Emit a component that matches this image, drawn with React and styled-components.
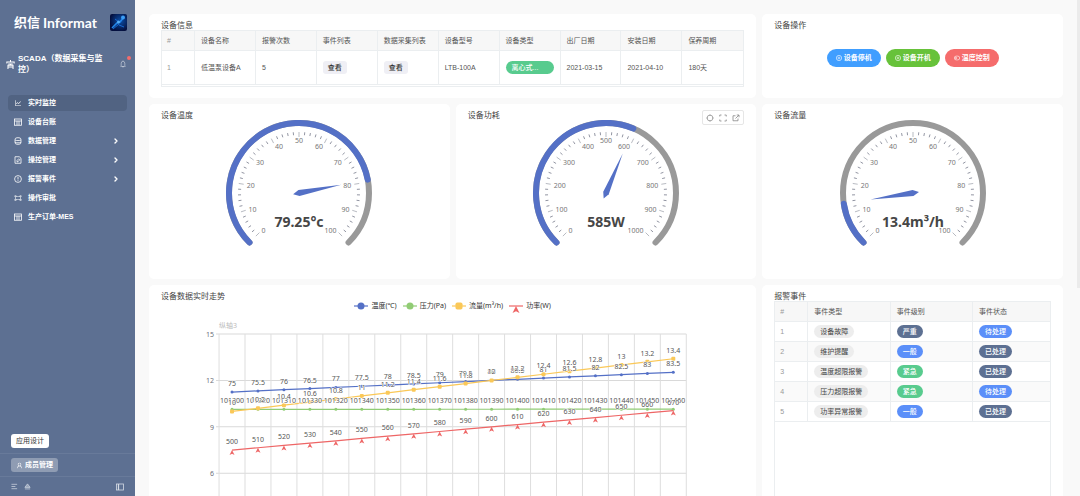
import styled, { createGlobalStyle, css } from 'styled-components';
import {
  AiOutlineLineChart,
  AiOutlineGateway,
  AiOutlineBell,
  AiOutlineUser,
} from 'react-icons/ai';
import { FiChevronRight } from 'react-icons/fi';

const GlobalStyle = createGlobalStyle`
  * {
    box-sizing: border-box;
  }

  body {
    margin: 0;
    font-family: 'Liberation Sans', 'Noto Sans CJK SC', sans-serif;
    font-size: 7px;
    line-height: 10px;
    color: #555;
  }

  button {
    font: inherit;
    border: none;
    padding: 0;
    cursor: pointer;
  }
`;

const Page = styled.div`
  position: relative;
  display: flex;
  height: 100vh;
  overflow: hidden;
  background: #f9f9f9;
`;

/* ---------- sidebar ---------- */

const Sidebar = styled.aside`
  flex: 0 0 135px;
  min-width: 0;
  display: flex;
  flex-direction: column;
  background: #5d7092;
  color: #fff;
`;

const Brand = styled.div`
  display: flex;
  align-items: center;
  justify-content: space-between;
  height: 17px;
  margin: 14px 8px 0 14px;
`;

const BrandName = styled.div`
  display: flex;
  align-items: center;
  gap: 3px;
  font-family: Lato, 'Noto Sans CJK SC', sans-serif;
  font-size: 14px;
  font-weight: 700;
  line-height: 17px;
  white-space: nowrap;
`;

const BrandCn = styled.span`
  font-size: 13px;
`;

const AppTitle = styled.div`
  display: flex;
  align-items: center;
  gap: 3px;
  margin: 22px 8px 0 6px;
`;

const AppName = styled.h1`
  flex: 1;
  margin: 0;
  padding-right: 6px;
  font-size: 8px;
  font-weight: 700;
  line-height: 11px;
`;

const BellButton = styled.button`
  position: relative;
  display: flex;
  background: none;
  color: #d5dbe5;

  &::after {
    content: '';
    position: absolute;
    top: -4px;
    right: -4px;
    width: 4px;
    height: 4px;
    border-radius: 50%;
    background: #f56c6c;
  }
`;

const Menu = styled.nav`
  display: flex;
  flex-direction: column;
  gap: 3px;
  margin: 20px 8px 0;
`;

const MenuItem = styled.a`
  display: flex;
  align-items: center;
  gap: 6px;
  height: 16px;
  padding: 0 7px 0 6px;
  border-radius: 4px;
  background: ${props => props.$active ? '#516382' : 'transparent'};
  color: #fff;
  font-weight: 700;
  text-decoration: none;

  span {
    flex: 1;
  }
`;

const SidebarBottom = styled.div`
  margin-top: auto;
`;

const SideRow = styled.div`
  display: flex;
  align-items: center;
  gap: 6px;
  height: ${props => props.$height}px;
  padding: 0 11px;
  border-top: 1px solid ${props => props.$plain ? 'transparent' : '#687a9a'};
`;

const SideButton = styled.button`
  display: flex;
  align-items: center;
  gap: 2px;
  height: 14px;
  padding: 0 5px;
  border-radius: 3px;
  background: ${props => props.$light ? '#fff' : '#8f9cb3'};
  color: ${props => props.$light ? '#333' : '#fff'};
  font-weight: ${props => props.$light ? 400 : 700};
`;

const GhostButton = styled.button`
  display: flex;
  background: none;
  color: #d5dbe5;
  margin-left: ${props => props.$end ? 'auto' : '0'};
`;

/* ---------- content ---------- */

const Content = styled.main`
  flex: 1;
  min-width: 0;
  display: grid;
  grid-template-columns: repeat(3, minmax(0, 1fr));
  grid-template-rows: 84px 175px auto;
  align-content: start;
  gap: 6px;
  padding: 14px 17px 14px 14px;
`;

const Card = styled.section`
  position: relative;
  display: flex;
  flex-direction: column;
  grid-column: span ${props => props.$span || 1};
  padding: 7px 12px 0;
  border-radius: 5px;
  background: #fff;
`;

const CardTitle = styled.h2`
  margin: 0;
  font-size: 8px;
  font-weight: 400;
  line-height: 9px;
  color: #444;
`;

const TableBox = styled.div`
  flex: ${props => props.$fill ? 1 : 'none'};
  margin-bottom: 12px;
  padding-bottom: 1px;
  border: 1px solid #ebeef0;
`;

const Table = styled.table`
  width: 100%;
  table-layout: fixed;
  border-spacing: 0;

  th,
  td {
    height: ${props => props.$rowHeight}px;
    padding: 0 6px;
    border-right: 1px solid #ebeef0;
    border-bottom: 1px solid #ebeef0;
    text-align: left;
    white-space: nowrap;
  }

  th {
    height: 20px;
    background: #f7f7f7;
    font-weight: 400;
  }

  th:first-child,
  td:first-child {
    width: 33px;
    padding-left: 5px;
    color: #999;
  }

  th:last-child,
  td:last-child {
    border-right: none;
  }

  tbody tr:nth-child(even) {
    background: #fafafa;
  }
`;

const WideHead = styled.th`
  width: 30%;
`;

const tagColors = {
  gray: '#ededed',
  navy: '#5d7092',
  blue: '#5b8ff9',
  green: '#58cb8e',
};

const Tag = styled.span`
  display: inline-block;
  height: 13px;
  padding: 0 6px;
  border-radius: 7px;
  line-height: 13px;
  vertical-align: middle;
  background: ${props => tagColors[props.$color]};
  color: ${props => props.$color === 'gray' ? '#444' : '#fff'};
  font-weight: ${props => props.$color === 'gray' ? 400 : 500};
  ${props => props.$block && css`
    display: block;
  `}
`;

const ViewButton = styled.button`
  height: 13px;
  padding: 0 5px;
  border-radius: 3px;
  background: #efeff5;
  color: #333;
  font-weight: 500;
  vertical-align: middle;
`;

const Actions = styled.div`
  display: flex;
  justify-content: center;
  gap: 5px;
  margin-top: 19px;
`;

const ActionButton = styled.button`
  display: flex;
  align-items: center;
  gap: 2px;
  height: 18px;
  padding: 0 9px;
  border-radius: 9px;
  background: ${props => props.$color};
  color: #fff;
  font-weight: 700;
`;

const Toolbar = styled.div`
  position: absolute;
  top: 6px;
  right: 12px;
  display: flex;
  align-items: center;
  gap: 5px;
  height: 15px;
  padding: 0 3px;
  border: 1px solid #e6e6e6;
  border-radius: 2px;
  background: #fff;
`;

const ToolButton = styled.button`
  display: flex;
  background: none;
  color: #888;
`;

const GaugeSvg = styled.svg`
  align-self: center;
  width: 160px;
  height: 150px;
  font-family: 'Noto Sans', 'Noto Sans CJK SC', sans-serif;
`;

const GaugeLabel = styled.text`
  font-size: 7px;
  fill: #777;
`;

const GaugeValue = styled.text`
  font-size: 14px;
  font-weight: 700;
  fill: #464646;
`;

const Legend = styled.div`
  display: flex;
  justify-content: center;
  gap: 6px;
  height: 10px;
  font-family: 'Noto Sans', 'Noto Sans CJK SC', sans-serif;
`;

const LegendItem = styled.span`
  display: flex;
  align-items: center;
  gap: 3px;
  color: #333;
  white-space: nowrap;

  svg {
    overflow: visible;
  }
`;

const ChartSvg = styled.svg`
  width: 100%;
  font-family: 'Noto Sans', 'Noto Sans CJK SC', sans-serif;
  font-size: 7px;
`;

const PointLabel = styled.text`
  fill: #555;
  stroke: #fff;
  stroke-width: 1px;
  paint-order: stroke;
  text-anchor: middle;
`;

const ScrollThumb = styled.div`
  position: absolute;
  top: 0;
  right: 0;
  width: 3px;
  height: 58vh;
  background: #ebebeb;
`;

/* ---------- icons ---------- */

function Icon({ size = 8, children }) {
  return (
    <svg width={size} height={size} viewBox="0 0 16 16" fill="none" stroke="currentColor" strokeWidth="1.6">
      {children}
    </svg>
  );
}

const TableIcon = () => (
  <Icon>
    <rect x="1" y="2" width="14" height="12.5" />
    <path d="M1 6h14M6 6v8M10 6v8" />
  </Icon>
);

const DatabaseIcon = () => (
  <Icon>
    <rect x="2" y="1.5" width="12" height="13" rx="4" />
    <path d="M2 6c2 1.500 10 1.500 12 0M2 10.500c2 1.500 10 1.500 12 0" />
  </Icon>
);

const ControlIcon = () => (
  <Icon>
    <path d="M2 1.500h8.500l3.500 3v10H2z" />
    <path d="M6 11.500V9l3.500-3.500 2 2L8 11.500z" />
  </Icon>
);

const AlertIcon = () => (
  <Icon>
    <circle cx="8" cy="8" r="6.8" />
    <path d="M8 4v5M8 10.500v1.700" />
  </Icon>
);

const PalaceIcon = () => (
  <Icon size={9}>
    <path d="M8 0v2.500M1.500 6V3.500h13V6M4 7h8M3.500 16V9.500h9V16M3.500 12.500h9M8 7v2.500" strokeWidth="1.8" />
  </Icon>
);

const RecordIcon = () => (
  <Icon size={6}>
    <circle cx="8" cy="8" r="7" />
    <circle cx="8" cy="8" r="2.5" />
  </Icon>
);

const ToggleIcon = () => (
  <Icon size={6}>
    <rect x="0.8" y="3" width="14.4" height="10" rx="5" />
    <circle cx="5.500" cy="8" r="2" />
  </Icon>
);

const RefreshIcon = () => (
  <Icon>
    <circle cx="8" cy="8" r="5.8" strokeWidth="1.4" />
    <path d="M8 1v2.500M8 12.500V15M1 8h2.500M12.500 8H15" />
  </Icon>
);

const FullscreenIcon = () => (
  <Icon>
    <path d="M1.500 5V2H5M11 2h3.500v3M14.500 11v3H11M5 14H1.500v-3" />
  </Icon>
);

const ShareIcon = () => (
  <Icon>
    <path d="M7 3.500H2v10h10V9M9.500 2H14v4.500M14 2L7 9" />
  </Icon>
);

const LinesIcon = () => (
  <Icon size={7}>
    <path d="M1 3h13M1 8h9M1 13h13" />
  </Icon>
);

const UpIcon = () => (
  <Icon size={7}>
    <path d="M8 2l6 8H2z" fill="currentColor" fillOpacity="0.5" />
    <path d="M2 13.500h12" />
  </Icon>
);

const CollapseIcon = () => (
  <Icon>
    <rect x="1" y="2" width="14" height="12" />
    <path d="M5 2v12" strokeWidth="2.500" />
  </Icon>
);

function AppLogo() {
  return (
    <svg width="17" height="17" viewBox="0 0 17 17">
      <defs>
        <radialGradient id="glow" cx="0.6" cy="0.4" r="0.6">
          <stop offset="0" stopColor="#0b4fa8" />
          <stop offset="1" stopColor="#04103f" />
        </radialGradient>
      </defs>
      <rect width="17" height="17" rx="2" fill="url(#glow)" />
      <path d="M2 14L7 9l3-1 4-5" fill="none" stroke="#2386ea" strokeWidth="1.6" />
      <path d="M5 5l4 3M9 11l5 2M3 15l6-5" fill="none" stroke="#1769d2" strokeWidth="1" />
      <circle cx="13" cy="3.500" r="2" fill="#3b9df5" />
      <circle cx="8.500" cy="8" r="1.500" fill="#56aef5" />
    </svg>
  );
}

/* ---------- data ---------- */

const menu = [
  { label: '实时监控', icon: <AiOutlineLineChart size={8} />, active: true },
  { label: '设备台账', icon: <TableIcon /> },
  { label: '数据管理', icon: <DatabaseIcon />, more: true },
  { label: '操控管理', icon: <ControlIcon />, more: true },
  { label: '报警事件', icon: <AlertIcon />, more: true },
  { label: '操作审批', icon: <AiOutlineGateway size={8} /> },
  { label: '生产订单-MES', icon: <TableIcon /> },
];

const deviceColumns = ['#', '设备名称', '报警次数', '事件列表', '数据采集列表', '设备型号', '设备类型', '出厂日期', '安装日期', '保养周期'];

const alarms = [
  { type: '设备故障', level: '严重', levelColor: 'navy', done: false },
  { type: '维护提醒', level: '一般', levelColor: 'blue', done: true },
  { type: '温度超限报警', level: '紧急', levelColor: 'green', done: true },
  { type: '压力超限报警', level: '紧急', levelColor: 'green', done: false },
  { type: '功率异常报警', level: '一般', levelColor: 'blue', done: true },
];

const range = (start, step) => Array.from({ length: 18 }, (_, i) => Number((start + step * i).toFixed(1)));

const series = [
  { name: '温度(℃)', color: '#5470c6', max: 100, shape: 'circle', data: range(75, 0.5) },
  {
    name: '压力(Pa)',
    color: '#91cc75',
    max: 150000,
    shape: 'circle',
    data: [101300, 101320, 101310, 101330, 101320, ...range(101340, 10).slice(0, 13)],
  },
  { name: '流量(m³/h)', color: '#fac858', max: 15, shape: 'rect', data: range(10, 0.2) },
  { name: '功率(W)', color: '#ee6666', max: 1000, shape: 'arrow', data: range(500, 10) },
];

/* ---------- charts ---------- */

const CX = 80;
const CY = 73;

// percent 0..1 runs clockwise over 270 degrees, from bottom left
function polar(percent, r, turn = 0) {
  const a = ((225 - percent * 270 + turn) * Math.PI) / 180;
  return [CX + r * Math.cos(a), CY - r * Math.sin(a)];
}

function arc(from, to, r) {
  const large = (to - from) * 270 > 180 ? 1 : 0;
  return `M${polar(from, r)}A${r} ${r} 0 ${large} 1 ${polar(to, r)}`;
}

function Gauge({ value, max, unit }) {
  const percent = value / max;
  const ticks = Array.from({ length: 51 }, (_, i) => i);
  const labels = Array.from({ length: 11 }, (_, i) => i);

  return (
    <GaugeSvg viewBox="0 0 160 150">
      <path d={arc(0, 1, 70)} fill="none" stroke="#999" strokeWidth="6" strokeLinecap="round" />
      <path d={arc(0, percent, 70)} fill="none" stroke="#5470c6" strokeWidth="6" strokeLinecap="round" />
      {ticks.map((i) => {
        const major = i % 5 === 0;
        const [x1, y1] = polar(i / 50, 61);
        const [x2, y2] = polar(i / 50, major ? 56 : 58);
        return <line key={i} x1={x1} y1={y1} x2={x2} y2={y2} stroke={major ? '#9a9da8' : '#63677a'} strokeWidth="0.7" />;
      })}
      {labels.map((i) => {
        const [x, y] = polar(i / 10, 53);
        const side = (x - CX) / 53;
        const anchor = side < -0.4 ? 'start' : side > 0.4 ? 'end' : 'middle';
        return (
          <GaugeLabel key={i} x={x} y={y + 3} textAnchor={anchor}>
            {(max / 10) * i}
          </GaugeLabel>
        );
      })}
      <polygon
        points={[polar(percent, 43), polar(percent, 3, 90), polar(percent, 6, 180), polar(percent, 3, -90)].join(' ')}
        fill="#5470c6"
      />
      <GaugeValue x={CX} y={CY + 34} textAnchor="middle">
        {value}{unit}
      </GaugeValue>
    </GaugeSvg>
  );
}

function Marker({ shape, x, y, size, color }) {
  const h = size / 2;
  if (shape === 'circle') return <circle cx={x} cy={y} r={h} fill={color} />;
  if (shape === 'rect') return <rect x={x - h} y={y - h} width={size} height={size} rx={size / 4} fill={color} />;
  return <path d={`M${x} ${y}l${h} ${size}l${-h} ${-size / 4}l${-h} ${size / 4}z`} fill={color} />;
}

const LEFT = 58;
const RIGHT = 525;
const TOP = 23;
const PLOT = 232;
const STEP = (RIGHT - LEFT) / 18;

function TrendChart() {
  const px = (i) => LEFT + STEP * (i + 0.5);
  const py = (v, max) => TOP + PLOT * (1 - v / max);

  return (
    <ChartSvg viewBox="0 0 583 270">
      <text x={LEFT} y={TOP - 6} fill="#bbb">纵轴3</text>
      {[15, 12, 9, 6, 3, 0].map((v) => (
        <g key={v}>
          <line x1={LEFT - 3} x2={RIGHT} y1={py(v, 15)} y2={py(v, 15)} stroke="#d9d9d9" />
          <text x={LEFT - 5} y={py(v, 15) + 3} textAnchor="end" fill="#6e7079">{v}</text>
        </g>
      ))}
      {Array.from({ length: 19 }, (_, i) => (
        <line key={i} x1={LEFT + STEP * i} x2={LEFT + STEP * i} y1={TOP} y2={TOP + PLOT} stroke="#dedede" />
      ))}
      {series.map((s) => (
        <g key={s.name}>
          <polyline
            points={s.data.map((v, i) => `${px(i)},${py(v, s.max)}`).join(' ')}
            fill="none"
            stroke={s.color}
            strokeWidth="1.2"
          />
          {s.data.map((v, i) => (
            <Marker
              key={i}
              shape={s.shape}
              x={px(i)}
              y={py(v, s.max)}
              size={{ circle: 3, rect: 4, arrow: 5 }[s.shape]}
              color={s.color}
            />
          ))}
        </g>
      ))}
      {series.map((s) =>
        s.data.map((v, i) => (
          <PointLabel key={`${s.name}${i}`} x={px(i)} y={py(v, s.max) - 6}>{v}</PointLabel>
        ))
      )}
    </ChartSvg>
  );
}

export default function App() {
  return (
    <Page>
      <GlobalStyle />

      <Sidebar>
        <Brand>
          <BrandName>
            <BrandCn>织信</BrandCn>
            <span>Informat</span>
          </BrandName>
          <AppLogo />
        </Brand>

        <AppTitle>
          <PalaceIcon />
          <AppName>SCADA（数据采集与监控）</AppName>
          <BellButton aria-label="通知">
            <AiOutlineBell size={8} />
          </BellButton>
        </AppTitle>

        <Menu>
          {menu.map((item) => (
            <MenuItem key={item.label} href="#" $active={item.active}>
              {item.icon}
              <span>{item.label}</span>
              {item.more && <FiChevronRight size={8} strokeWidth={4} />}
            </MenuItem>
          ))}
        </Menu>

        <SidebarBottom>
          <SideRow $height={26} $plain>
            <SideButton $light>应用设计</SideButton>
          </SideRow>
          <SideRow $height={23}>
            <SideButton>
              <AiOutlineUser size={7} />
              成员管理
            </SideButton>
          </SideRow>
          <SideRow $height={20}>
            <GhostButton aria-label="列表"><LinesIcon /></GhostButton>
            <GhostButton aria-label="置顶"><UpIcon /></GhostButton>
            <GhostButton aria-label="收起" $end><CollapseIcon /></GhostButton>
          </SideRow>
        </SidebarBottom>
      </Sidebar>

      <Content>
        <Card $span={2}>
          <CardTitle>设备信息</CardTitle>
          <TableBox>
            <Table $rowHeight={34}>
              <thead>
                <tr>
                  {deviceColumns.map((name) => <th key={name}>{name}</th>)}
                </tr>
              </thead>
              <tbody>
                <tr>
                  <td>1</td>
                  <td>低温泵设备A</td>
                  <td>5</td>
                  <td><ViewButton>查看</ViewButton></td>
                  <td><ViewButton>查看</ViewButton></td>
                  <td>LTB-100A</td>
                  <td><Tag $color="green" $block>离心式...</Tag></td>
                  <td>2021-03-15</td>
                  <td>2021-04-10</td>
                  <td>180天</td>
                </tr>
              </tbody>
            </Table>
          </TableBox>
        </Card>

        <Card>
          <CardTitle>设备操作</CardTitle>
          <Actions>
            <ActionButton $color="#409eff"><RecordIcon />设备停机</ActionButton>
            <ActionButton $color="#67c23a"><RecordIcon />设备开机</ActionButton>
            <ActionButton $color="#f56c6c"><ToggleIcon />温度控制</ActionButton>
          </Actions>
        </Card>

        <Card>
          <CardTitle>设备温度</CardTitle>
          <Gauge value={79.25} max={100} unit="°c" />
        </Card>

        <Card>
          <CardTitle>设备功耗</CardTitle>
          <Toolbar>
            <ToolButton aria-label="刷新"><RefreshIcon /></ToolButton>
            <ToolButton aria-label="全屏"><FullscreenIcon /></ToolButton>
            <ToolButton aria-label="打开"><ShareIcon /></ToolButton>
          </Toolbar>
          <Gauge value={585} max={1000} unit="W" />
        </Card>

        <Card>
          <CardTitle>设备流量</CardTitle>
          <Gauge value={13.4} max={100} unit="m³/h" />
        </Card>

        <Card $span={2}>
          <CardTitle>设备数据实时走势</CardTitle>
          <Legend>
            {series.map((s) => (
              <LegendItem key={s.name}>
                <svg width="14" height="8" viewBox="0 0 14 8">
                  <line x1="0" x2="14" y1="4" y2="4" stroke={s.color} strokeWidth="1.2" />
                  <Marker shape={s.shape} x={7} y={4} size={7} color={s.color} />
                </svg>
                {s.name}
              </LegendItem>
            ))}
          </Legend>
          <TrendChart />
        </Card>

        <Card>
          <CardTitle>报警事件</CardTitle>
          <TableBox $fill>
            <Table $rowHeight={20}>
              <thead>
                <tr>
                  <th>#</th>
                  <WideHead>事件类型</WideHead>
                  <WideHead>事件级别</WideHead>
                  <th>事件状态</th>
                </tr>
              </thead>
              <tbody>
                {alarms.map((row, i) => (
                  <tr key={row.type}>
                    <td>{i + 1}</td>
                    <td><Tag $color="gray">{row.type}</Tag></td>
                    <td><Tag $color={row.levelColor}>{row.level}</Tag></td>
                    <td><Tag $color={row.done ? 'navy' : 'blue'}>{row.done ? '已处理' : '待处理'}</Tag></td>
                  </tr>
                ))}
              </tbody>
            </Table>
          </TableBox>
        </Card>
      </Content>

      <ScrollThumb />
    </Page>
  );
}
